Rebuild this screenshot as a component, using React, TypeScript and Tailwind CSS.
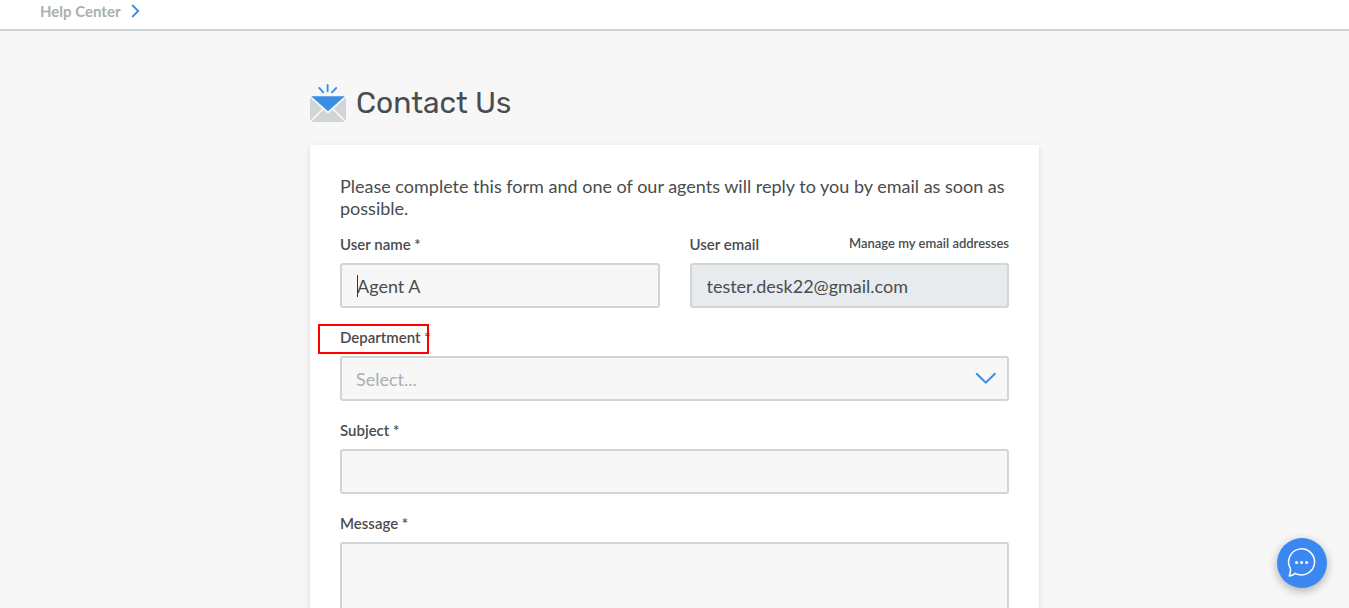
import type { ReactNode } from 'react';

const fieldClass =
  'block h-[45px] w-full rounded-[3px] border-2 border-[#d1d5d5] bg-[#f7f7f7] px-[15px] text-lg text-[#494c4e] outline-none';

function Label({ htmlFor, required, children }: { htmlFor: string; required?: boolean; children: ReactNode }) {
  return (
    <label htmlFor={htmlFor} className="block text-[15px] leading-[18px] font-semibold text-[#494c4e]">
      {children}
      {required && ' *'}
    </label>
  );
}

function EnvelopeIcon() {
  return (
    <svg width="36" height="38" viewBox="0 0 36 38" aria-hidden="true" className="shrink-0">
      <rect y="12" width="36" height="26" rx="1" fill="#d1d5d5" />
      <path d="M0 38 14 24M36 38 22 24" stroke="#f7f7f7" strokeWidth="1.7" />
      <path d="M-1 11.5h38L18 28.5z" fill="#3a8de5" stroke="#f7f7f7" strokeWidth="1.7" />
      <path d="M9.2 3.9 13.2 8.3M17.6 1v6M26.2 4 22 8.3" stroke="#3a8de5" strokeWidth="1.9" strokeLinecap="round" />
    </svg>
  );
}

export default function App() {
  return (
    <div className="flex h-screen flex-col overflow-y-auto bg-[#f7f7f7] font-['Lato','Noto_Sans',sans-serif] text-[#494c4e] [scrollbar-width:none]">
      <header className="h-[31px] shrink-0 border-b-2 border-[#d1d5d5] bg-white px-10">
        <nav aria-label="Breadcrumb" className="flex h-[22px] items-center gap-[11px]">
          <a href="#help" className="text-[15px] leading-[22px] font-bold text-[#a9afb0]">Help Center</a>
          <svg width="9" height="14" viewBox="0 0 9 14" fill="none" aria-hidden="true">
            <path d="M1.2 1 7.2 7 1.2 13" stroke="#3a8de5" strokeWidth="1.8" />
          </svg>
        </nav>
      </header>

      <main className="mx-auto w-full max-w-[729px] shrink-0 pt-[53px]">
        <div className="flex items-center gap-[10px]">
          <EnvelopeIcon />
          <h1 className="font-['Rubik','Roboto',sans-serif] text-[30px] leading-[38px] font-normal">Contact Us</h1>
        </div>

        <form className="mt-[23px] bg-white p-[30px] shadow-[0_2px_6px_rgba(0,0,0,0.12)]">
          <p className="mb-4 text-lg leading-[22px]">
            Please complete this form and one of our agents will reply to you by email as soon as possible.
          </p>

          <div className="flex flex-col gap-5">
            <div className="grid grid-cols-2 gap-[30px]">
              <div className="flex flex-col gap-[10px]">
                <Label htmlFor="name" required>User name</Label>
                <div className="relative">
                  <input id="name" defaultValue="Agent A" className={fieldClass} />
                  <span aria-hidden="true" className="absolute top-3 left-[17px] h-[22px] w-px bg-[#333333]" />
                </div>
              </div>
              <div className="flex flex-col gap-[10px]">
                <div className="flex items-start justify-between">
                  <Label htmlFor="email">User email</Label>
                  <a href="#emails" className="text-[13px] leading-4 font-semibold">Manage my email addresses</a>
                </div>
                <input
                  id="email"
                  type="email"
                  readOnly
                  value="tester.desk22@gmail.com"
                  className="block h-[45px] w-full rounded-[3px] border-2 border-[#d1d5d5] bg-[#e7ebee] px-[15px] text-lg text-[#494c4e] outline-none"
                />
              </div>
            </div>

            <div className="flex flex-col gap-[10px]">
              <div className="relative">
                <Label htmlFor="department" required>Department</Label>
                <span aria-hidden="true" className="absolute -top-1 -left-[22px] h-[30px] w-[111px] border-2 border-[#ff0000]" />
              </div>
              <div className="relative">
                <select
                  id="department"
                  defaultValue=""
                  className="block h-[45px] w-full appearance-none rounded-[3px] border-2 border-[#d1d5d5] bg-[#f7f7f7] px-[14px] text-lg text-[#a9afb0] outline-none"
                >
                  <option value="">Select...</option>
                </select>
                <svg width="22" height="13" viewBox="0 0 22 13" fill="none" aria-hidden="true" className="pointer-events-none absolute top-4 right-3">
                  <path d="M1.2 1.2 10.8 10.6 20.4 1.2" stroke="#3a8de5" strokeWidth="2" />
                </svg>
              </div>
            </div>

            <div className="flex flex-col gap-[10px]">
              <Label htmlFor="subject" required>Subject</Label>
              <input id="subject" className={fieldClass} />
            </div>

            <div className="flex flex-col gap-[10px]">
              <Label htmlFor="message" required>Message</Label>
              <textarea
                id="message"
                rows={6}
                className="block w-full resize-none rounded-[3px] border-2 border-[#d1d5d5] bg-[#f7f7f7] px-[15px] py-2 text-lg outline-none"
              />
            </div>
          </div>
        </form>
      </main>

      <button
        type="button"
        aria-label="Open chat"
        className="fixed right-[22px] bottom-5 flex size-[50px] items-center justify-center rounded-full bg-[#3c88f2] shadow-[0_3px_10px_rgba(0,0,0,0.3)]"
      >
        <svg width="30" height="30" viewBox="0 0 30 30" fill="none" aria-hidden="true">
          <path d="M3.3 20.4A13 13 0 1 1 8.3 25.3C6.5 26.8 4.3 27.9 2.2 28 3.2 25.8 3.8 23.2 3.3 20.4z" stroke="#ffffff" strokeWidth="1.5" strokeLinejoin="round" />
          <circle cx="9.6" cy="14.5" r="1.5" fill="#ffffff" />
          <circle cx="14.6" cy="14.5" r="1.5" fill="#ffffff" />
          <circle cx="19.6" cy="14.5" r="1.5" fill="#ffffff" />
        </svg>
      </button>
    </div>
  );
}
